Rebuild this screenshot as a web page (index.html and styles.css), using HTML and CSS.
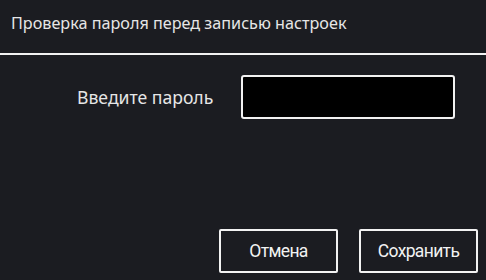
FILE: index.html
```html
<!DOCTYPE html>
<html lang="ru">
<head>
<meta charset="utf-8">
<link rel="stylesheet" href="styles.css">
</head>
<body>
<div class="dialog">
  <div class="header">Проверка пароля перед записью настроек</div>
  <div class="body">
    <div class="row">
      <label class="label" for="pw">Введите пароль</label>
      <input class="input" id="pw" type="password">
    </div>
  </div>
  <div class="footer">
    <button class="btn">Отмена</button>
    <button class="btn">Сохранить</button>
  </div>
</div>
</body>
</html>
```
FILE: styles.css
```css
html, body {
  margin: 0;
  padding: 0;
  background: #1b1c21;
}
.dialog {
  width: 486px;
  height: 280px;
  display: flex;
  flex-direction: column;
  color: #e6e6e6;
  font-family: "Noto Sans", "Open Sans", sans-serif;
}
.header {
  height: 55px;
  box-sizing: border-box;
  padding: 12px 0 0 11px;
  font-size: 16.2px;
  line-height: 22px;
  border-bottom: 2px solid #f2f2f2;
}
.body {
  flex: 1;
  padding-top: 20px;
}
.row {
  display: flex;
  align-items: center;
  gap: 26px;
  padding-left: 77px;
}
.label {
  width: 138px;
  font-size: 17.6px;
  line-height: 44px;
  white-space: nowrap;
}
.input {
  width: 214px;
  height: 44px;
  box-sizing: border-box;
  margin: 0;
  background: #000;
  border: 2px solid #f2f2f2;
  border-radius: 3px;
  outline: none;
}
.footer {
  display: flex;
  justify-content: flex-end;
  gap: 21px;
  padding: 0 8px 7px 0;
}
.btn {
  width: 119px;
  height: 44px;
  margin: 0;
  padding: 0;
  background: transparent;
  border: 2px solid #f2f2f2;
  border-radius: 2px;
  color: #f2f2f2;
  font-family: Roboto, sans-serif;
  font-size: 17.5px;
  letter-spacing: -0.65px;
}
```
